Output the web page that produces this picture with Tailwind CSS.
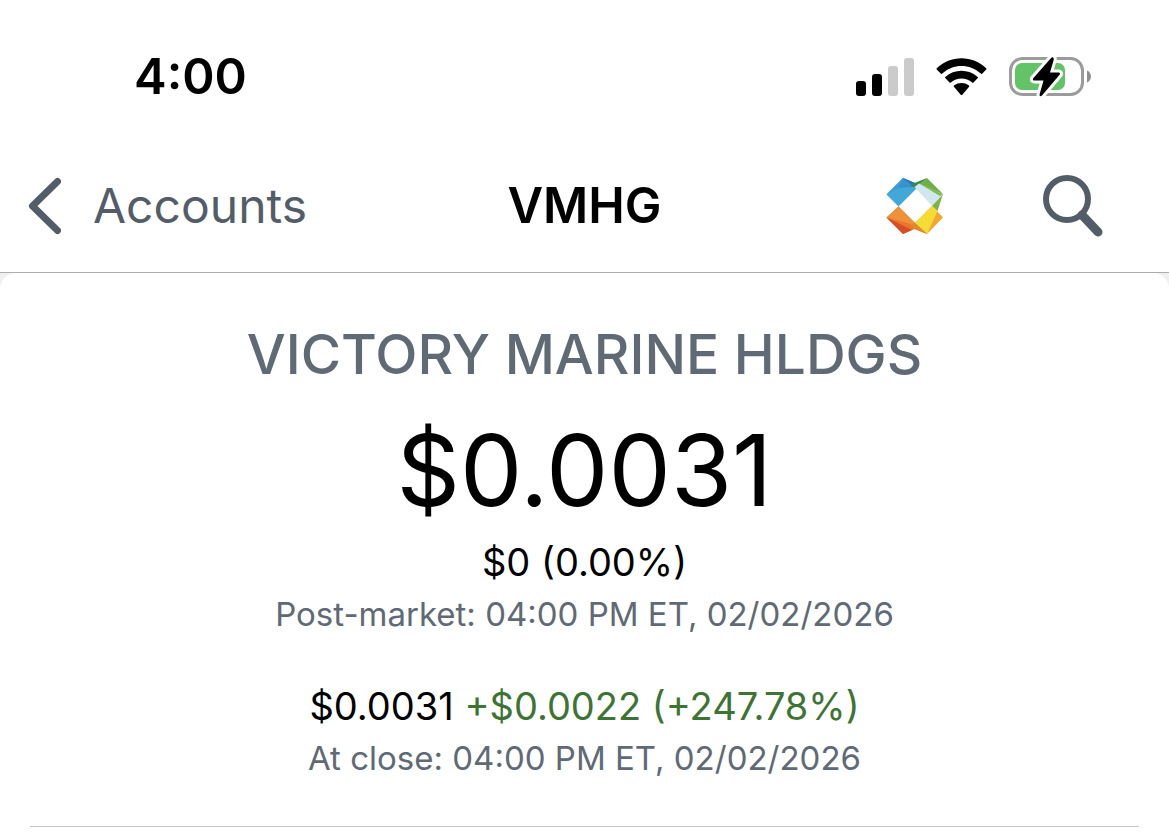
<!DOCTYPE html>
<html lang="en">
  <head>
    <meta charset="UTF-8" />
    <meta name="viewport" content="width=device-width, initial-scale=1.0" />
    <title>VMHG</title>
    <script src="https://cdn.jsdelivr.net/npm/@tailwindcss/browser@4"></script>
  </head>
  <body class="min-h-screen bg-white font-['Inter',sans-serif] text-black">
    <!-- Status bar -->
    <div class="flex items-center justify-between pt-[47px] pb-8 pl-[134px] pr-[78px]">
      <span class="text-[49px] leading-[60px] font-semibold">4:00</span>
      <div class="flex items-center gap-[22px]">
        <svg class="w-[58px] h-[38px]" viewBox="0 0 58 38">
          <rect x="0" y="23" width="10" height="15" rx="3" />
          <rect x="16" y="16" width="10" height="22" rx="3" />
          <rect x="32" y="8" width="10" height="30" rx="3" fill="#cbcbcb" />
          <rect x="48" y="0" width="10" height="38" rx="3" fill="#cbcbcb" />
        </svg>
        <svg class="w-[51px] h-[38px]" viewBox="0 0 51 38">
          <path d="M0.8 10.3C14-3.2 37-3.2 50.2 10.3Q50.8 11 50.2 11.6L46.1 15.7Q45.5 16.2 44.8 15.6C34 5.3 17 5.3 6.2 15.6Q5.5 16.2 4.9 15.7L0.8 11.6Q0.2 11 0.8 10.3Z" />
          <path d="M9.3 18.9C18.3 10.7 32.7 10.7 41.7 18.9Q42.4 19.5 41.8 20.1L37.5 24.4Q36.9 25 36.2 24.4C30 19.1 21 19.1 14.8 24.4Q14.1 25 13.5 24.4L9.2 20.1Q8.6 19.5 9.3 18.9Z" />
          <path d="M18 27.5C22.2 24.2 28.8 24.2 33 27.5Q33.7 28.1 33.1 28.8L26.3 36.7Q25.5 37.5 24.7 36.7L17.9 28.8Q17.3 28.1 18 27.5Z" />
        </svg>
        <svg class="w-[82px] h-[42px]" viewBox="0 0 82 42">
          <rect x="1.5" y="2.5" width="72" height="36" rx="12" fill="none" stroke="#9b9b9d" stroke-width="3" />
          <rect x="6" y="7" width="50" height="27" rx="7" fill="#62c466" />
          <path d="M78 14.500C83.3 16.500 83.3 24.500 78 26.500Z" fill="#8e8e90" />
          <path d="M42.500 1.500L24 22.500Q23.300 24.500 25.500 24.500H34.500L30.500 38.500Q30.500 41.500 33 39.500L50.800 18.500Q51.700 16.700 49.700 16.500H41L44.800 3.500Q44.800 0.500 42.500 1.500Z" stroke="#fff" stroke-width="6" paint-order="stroke" stroke-linejoin="round" />
        </svg>
      </div>
    </div>

    <!-- Navigation -->
    <header class="grid grid-cols-[1fr_auto_1fr] items-center h-[134px] px-7 border-b border-[#adadb0]">
      <a href="#" class="flex items-center gap-8 text-[#535d68] text-[48px] leading-[60px]">
        <svg class="w-[33px] h-[58px]" viewBox="0 0 33 58" fill="none" stroke="currentColor" stroke-width="7" stroke-linecap="round" stroke-linejoin="round">
          <path d="M29.5 4.500L4.500 29L29.500 53.500" />
        </svg>
        Accounts
      </a>
      <h1 class="text-[49px] leading-[60px] font-semibold">VMHG</h1>
      <div class="flex items-center justify-end gap-[100px] pr-[38px]">
        <button type="button" aria-label="Home">
          <svg class="w-[57px] h-[56px]" viewBox="0 0 57 56">
            <path d="M17 0L0.500 16.500L12.500 28.500L34 7Z" fill="#42a8da" />
            <path d="M17 0L13 10L0.500 16.500Z" fill="#3f9bd6" />
            <path d="M17 0L34 7L28.500 9L12.500 10Z" fill="#3593d0" />
            <path d="M17 0L28.500 5L34 7L28 9Z" fill="#2778b4" />
            <path d="M28.500 5L41 0L34 7L28.500 9L24 8Z" fill="#338a4c" />
            <path d="M41 0L57 16L33 6Z" fill="#6db048" />
            <path d="M33 5.500L56 16.500L46 28L28.500 9Z" fill="#d0e7ef" />
            <path d="M33 5.500L57 16L54 18Z" fill="#83bb50" />
            <path d="M57 16L51.500 33L46 28Z" fill="#7cb447" />
            <path d="M46 28L57 39.500L41 56L29 45Z" fill="#f3a730" />
            <path d="M46 28L51.500 33L41 56L29 45Z" fill="#f5dc35" />
            <path d="M12.500 28.500L0.500 39.500L17 56L28.500 51L41 56L29 45Z" fill="#e9762c" />
            <path d="M29 45L41 56L28.500 51L23 45Z" fill="#df8a2c" />
            <path d="M12.500 28.500L0.500 39.500L25 46L29 45Z" fill="#ee9138" />
            <path d="M0.500 39.500L26 52L17 56Z" fill="#d64d27" />
          </svg>
        </button>
        <button type="button" aria-label="Search">
          <svg class="w-[60px] h-[62px]" viewBox="0 0 60 62" fill="none" stroke="#535d68">
            <circle cx="24" cy="24" r="21" stroke-width="6" />
            <path d="M39 40L55 57" stroke-width="9" stroke-linecap="round" />
          </svg>
        </button>
      </div>
    </header>

    <!-- Quote -->
    <main class="bg-[#f0f0f1]">
      <section class="flex flex-col items-center bg-white rounded-t-2xl px-[30px] pt-[49px] text-center">
        <h2 class="text-[55px] leading-[64px] font-medium text-[#606a75]">VICTORY MARINE HLDGS</h2>
        <p class="mt-7 text-[99px] leading-[112px]">$0.0031</p>
        <p class="mt-3 text-[38px] leading-[48px]">$0 (0.00%)</p>
        <p class="mt-1 text-[33px] leading-[48px] text-[#606a75]">Post-market: 04:00 PM ET, 02/02/2026</p>
        <p class="mt-11 text-[38px] leading-[48px]">
          $0.0031 <span class="text-[#3d7433]">+$0.0022 (+247.78%)</span>
        </p>
        <p class="mt-1 text-[33px] leading-[48px] text-[#606a75]">At close: 04:00 PM ET, 02/02/2026</p>
        <hr class="mt-11 w-full border-[#c6c6c8]" />
      </section>
    </main>
  </body>
</html>
